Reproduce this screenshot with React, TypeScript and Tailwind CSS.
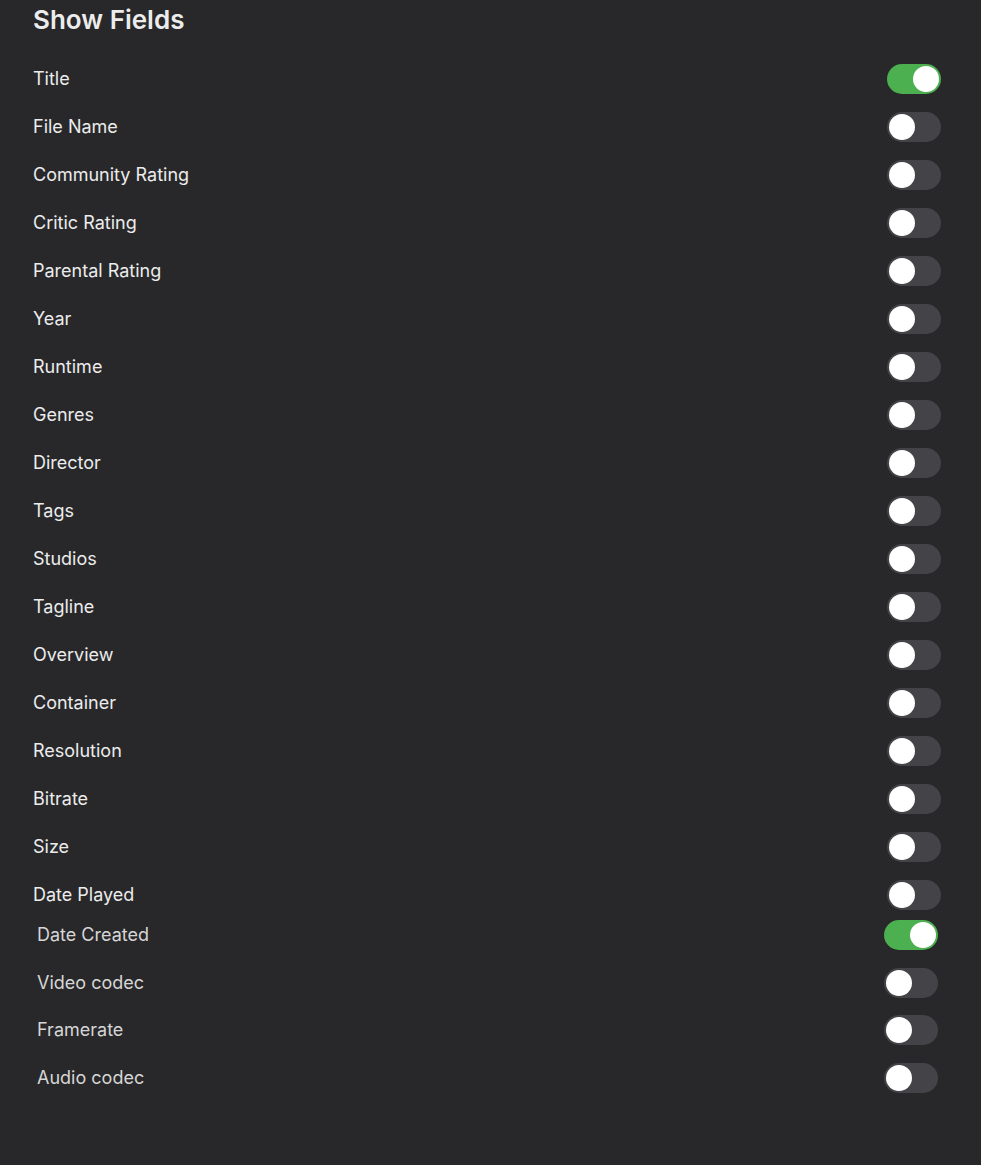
import React, { useState } from 'react';

type Field = { label: string; on: boolean };

const mainFields: Field[] = [
    { label: 'Title', on: true },
    { label: 'File Name', on: false },
    { label: 'Community Rating', on: false },
    { label: 'Critic Rating', on: false },
    { label: 'Parental Rating', on: false },
    { label: 'Year', on: false },
    { label: 'Runtime', on: false },
    { label: 'Genres', on: false },
    { label: 'Director', on: false },
    { label: 'Tags', on: false },
    { label: 'Studios', on: false },
    { label: 'Tagline', on: false },
    { label: 'Overview', on: false },
    { label: 'Container', on: false },
    { label: 'Resolution', on: false },
    { label: 'Bitrate', on: false },
    { label: 'Size', on: false },
    { label: 'Date Played', on: false },
];

const extraFields: Field[] = [
    { label: 'Date Created', on: true },
    { label: 'Video codec', on: false },
    { label: 'Framerate', on: false },
    { label: 'Audio codec', on: false },
];

const Toggle: React.FC<{ on: boolean; onChange: () => void }> = ({ on, onChange }) => (
    <button
        onClick={onChange}
        className={`relative w-[54px] h-[30px] rounded-full transition-colors ${on ? 'bg-[#4caf50]' : 'bg-[#444448]'}`}
    >
        <span
            className={`absolute top-[2px] w-[26px] h-[26px] rounded-full bg-white transition-all ${on ? 'left-[26px]' : 'left-[2px]'}`}
        />
    </button>
);

const FieldList: React.FC<{ initial: Field[]; rowClass: string; textClass: string }> = ({ initial, rowClass, textClass }) => {
    const [fields, setFields] = useState(initial);
    const flip = (i: number) => setFields(prev => prev.map((f, j) => (j === i ? { ...f, on: !f.on } : f)));

    return (
        <div>
            {fields.map((f, i) => (
                <div key={f.label} className={`flex items-center justify-between ${rowClass}`}>
                    <span className={textClass}>{f.label}</span>
                    <Toggle on={f.on} onChange={() => flip(i)} />
                </div>
            ))}
        </div>
    );
};

const App: React.FC = () => {
    return (
        <div className="min-h-[1165px] bg-[#28282a] px-[33px] pr-[40px] pt-[4px]" style={{ fontFamily: 'Inter, "Noto Sans", sans-serif' }}>
            <h1 className="text-[26px] font-semibold text-[#ececec] leading-8">Show Fields</h1>
            <div className="mt-[19px]">
                <FieldList initial={mainFields} rowClass="h-12" textClass="text-lg text-[#ececec]" />
                <div className="-mt-[8px] pl-[4px] pr-[3px]">
                    <FieldList initial={extraFields} rowClass="h-[47.7px]" textClass="text-lg text-[#d6d6d6]" />
                </div>
            </div>
        </div>
    );
};

export default App;
